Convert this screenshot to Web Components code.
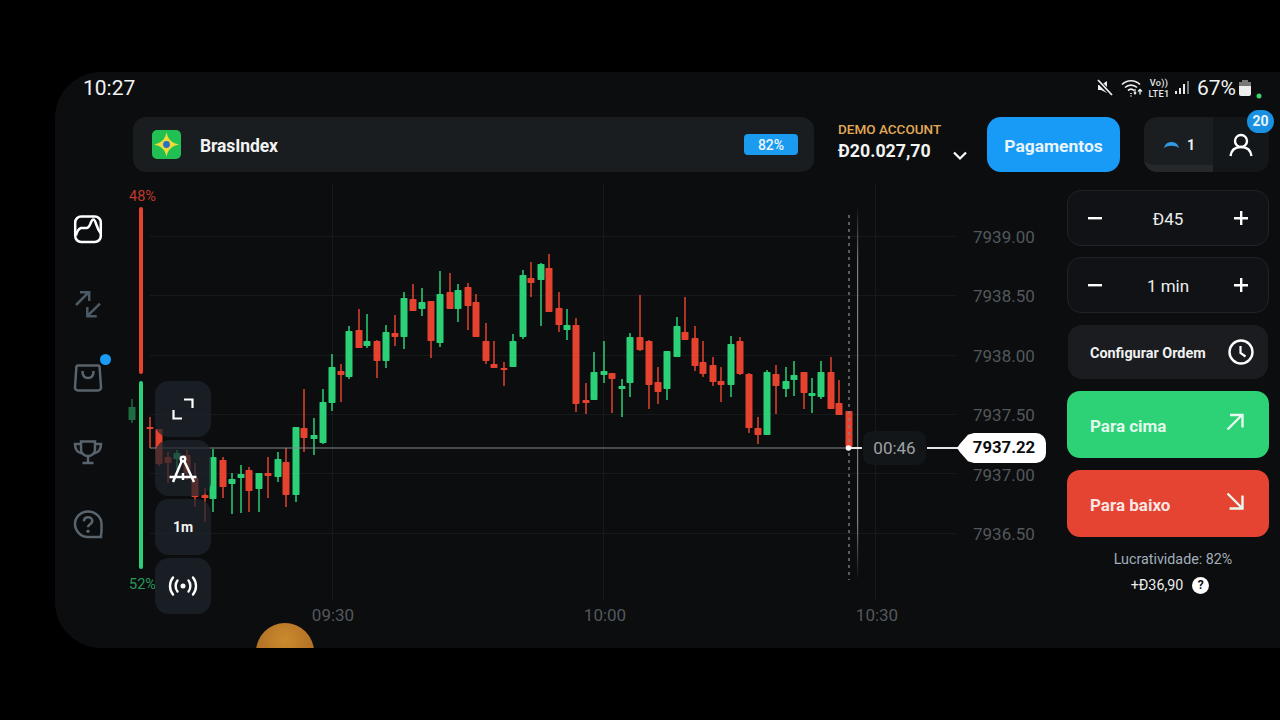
<!DOCTYPE html>
<html lang="pt">
<head>
<meta charset="utf-8">
<title>BrasIndex</title>
<style>
  html, body { margin: 0; height: 100%; background: #000; overflow: hidden; }
  body { font-family: Roboto, "Liberation Sans", sans-serif; color: #fff; padding: 72px 0 0 55px; box-sizing: border-box; }
</style>
</head>
<body>
<trade-app>
  <status-bar slot="status"></status-bar>
  <asset-bar slot="top" name="BrasIndex" payout="82%"></asset-bar>
  <account-info slot="top"></account-info>
  <pay-button slot="top">Pagamentos</pay-button>
  <profile-box slot="top"></profile-box>
  <side-nav slot="rail"></side-nav>
  <candle-chart slot="chart"></candle-chart>
  <stepper-control slot="panel">Đ45</stepper-control>
  <stepper-control slot="panel" style="margin-top:11px">1 min</stepper-control>
  <order-config slot="panel"></order-config>
  <trade-button slot="panel" dir="up">Para cima</trade-button>
  <trade-button slot="panel" dir="down">Para baixo</trade-button>
  <profit-info slot="panel"></profit-info>
</trade-app>

<script>
const makeEl = (html) => {
  const t = document.createElement('template');
  t.innerHTML = html;
  return t;
};

class BaseEl extends HTMLElement {
  constructor() {
    super();
    this.attachShadow({mode: 'open'});
    this.shadowRoot.appendChild(this.constructor.tpl.content.cloneNode(true));
  }
}

class TradeApp extends BaseEl {
  static tpl = makeEl(`
    <style>
      :host { display: block; width: 1225px; height: 576px; background: #0b0d0f; border-radius: 46px 0 0 46px; overflow: hidden; position: relative; }
      .top { display: flex; height: 55px; padding-left: 78px; margin-top: -1px; margin-bottom: 18px; }
      .main { display: grid; grid-template-columns: 70px 942px 202px; height: 458px; }
      .panel { display: flex; flex-direction: column; }
    </style>
    <slot name="status"></slot>
    <div class="top"><slot name="top"></slot></div>
    <div class="main">
      <slot name="rail"></slot>
      <slot name="chart"></slot>
      <div class="panel"><slot name="panel"></slot></div>
    </div>
  `);
}

class StatusBar extends BaseEl {
  static tpl = makeEl(`
    <style>
      :host { display: flex; align-items: center; height: 46px; padding: 0 18px 14px 28px; box-sizing: border-box; color: #f1f2f2; }
      .time { font-size: 21px; flex: 1; }
      .icons { display: flex; align-items: center; }
      .volte { font-size: 9.200px; font-weight: 500; line-height: 11px; width: 22px; margin-left: 3px; text-align: center; color: #e8e8e8; white-space: nowrap; letter-spacing: .3px; }
      .pct { font-size: 21px; margin-left: 6px; }
      svg { display: block; overflow: visible; }
    </style>
    <span class="time">10:27</span>
    <div class="icons">
      <svg width="16" height="18" viewBox="0 0 16 18"><path d="M1 6h3l6-4v12L4 11H1z" fill="#eee"/><path d="M0 1l16 16" stroke="#0b0d0f" stroke-width="4"/><path d="M1 1l14 15" stroke="#eee" stroke-width="1.8"/></svg>
      <svg width="24" height="20" viewBox="0 0 24 20" style="margin-left:8px" fill="none" stroke="#eee"><path d="M1 6.500c5-5 13-5 18 0M4 9.500c3.300-3.200 8.700-3.200 12 0M7 12.500c1.800-1.600 4.200-1.600 6 0" stroke-width="1.7"/><path d="M10 15v1M10 17.600v.8" stroke-width="1.6"/><path d="M19 16.500v-5M17 13.500l2-2 2 2" stroke-width="1.3"/><path d="M14 11v5M12.800 14.500l1.200 1.600 1.200-1.600" stroke-width="1.2"/></svg>
      <div class="volte">Vo))<br>LTE1</div>
      <svg width="17" height="16" viewBox="0 0 17 16" style="margin-left:4px" fill="#e8e8e8"><rect x="1" y="11" width="2" height="3"/><rect x="5" y="8" width="2" height="6"/><rect x="9" y="4" width="2" height="10"/><rect x="13" y="1" width="2" height="13" fill="#777"/></svg>
      <span class="pct">67%</span>
      <svg width="14" height="18" viewBox="0 0 14 18" style="margin-left:2px"><rect x="4" y="1" width="6" height="2" fill="#777"/><rect x="1" y="3" width="12" height="14" rx="2" fill="#eee"/><rect x="1" y="3" width="12" height="4" fill="#777"/></svg>
      <svg width="6" height="18" viewBox="0 0 6 18" style="margin-left:4px"><circle cx="3" cy="17" r="2.500" fill="#3ed36b"/></svg>
    </div>
  `);
}

class AssetBar extends BaseEl {
  static tpl = makeEl(`
    <style>
      :host { display: flex; align-items: center; box-sizing: border-box; width: 681px; background: #1a1d20; border-radius: 13px; padding: 0 16px 0 19px; }
      svg { display: block; }
      .name { font-size: 17.500px; font-weight: 700; margin-left: 19px; padding-top: 3px; flex: 1; color: #f2f3f3; letter-spacing: -.1px; }
      .badge { width: 54px; height: 21px; line-height: 22px; border-radius: 4px; background: #1a9bf0; font-size: 14px; font-weight: 500; text-align: center; color: #eaf5fd; }
    </style>
    <svg width="29" height="29" viewBox="0 0 29 29"><rect width="29" height="29" rx="5" fill="#21c053"/><path d="M14.500 2c1.200 7 5 11 12.500 12.500-7.500 1.500-11.300 5.500-12.500 12.500-1.200-7-5-11-12.500-12.500C9.500 13 13.300 9 14.500 2z" fill="#f0da3a"/><circle cx="14.500" cy="14.500" r="3.400" fill="#2a6fc4"/></svg>
    <span class="name"></span>
    <span class="badge"></span>
  `);
  connectedCallback() {
    this.shadowRoot.querySelector('.name').textContent = this.getAttribute('name');
    this.shadowRoot.querySelector('.badge').textContent = this.getAttribute('payout');
  }
}

class AccountInfo extends BaseEl {
  static tpl = makeEl(`
    <style>
      :host { display: grid; grid-template-columns: 1fr 20px; box-sizing: border-box; width: 149px; margin-left: 24px; padding: 1px 20px 0 0; align-content: start; }
      .label { grid-column: 1 / 3; font-size: 13.500px; font-weight: 500; color: #e2a956; white-space: nowrap; line-height: 22px; }
      .sum { font-size: 17.800px; font-weight: 700; color: #f2f3f3; white-space: nowrap; line-height: 22px; }
      svg { display: block; margin: 11px 0 0 6px; overflow: visible; }
    </style>
    <div class="label">DEMO ACCOUNT</div>
    <div class="sum">Đ20.027,70</div>
    <svg width="14" height="9" viewBox="0 0 14 9" fill="none" stroke="#fff" stroke-width="2.200"><path d="M1 1.500l6 6 6-6"/></svg>
  `);
}

class PayButton extends BaseEl {
  static tpl = makeEl(`
    <style>
      :host { display: flex; align-items: center; justify-content: center; box-sizing: border-box; padding-top: 2px; width: 133px; background: #189bf6; border-radius: 14px; font-size: 17.400px; font-weight: 700; color: #e8f5fe; }
    </style>
    <slot></slot>
  `);
}

class ProfileBox extends BaseEl {
  static tpl = makeEl(`
    <style>
      :host { display: flex; width: 125px; margin-left: 24px; position: relative; }
      .left { width: 69px; background: #1b1e21; border-radius: 13px 0 0 13px; border-bottom: 7px solid #26292c; box-sizing: border-box; display: flex; align-items: center; justify-content: center; gap: 8px; padding: 7px 0 0 2px; font-size: 14px; font-weight: 700; color: #eee; }
      .right { flex: 1; background: #141719; border-radius: 0 13px 13px 0; display: flex; align-items: center; justify-content: center; }
      .count { position: absolute; right: -5px; top: -7px; width: 27px; height: 23px; line-height: 23px; border-radius: 12px; background: #1a90e0; font-size: 14px; font-weight: 700; text-align: center; color: #e8f5fe; }
      svg { display: block; }
    </style>
    <div class="left">
      <svg width="15" height="8" viewBox="0 0 15 8"><path d="M0 7c1-4 4-6 7.500-6S14 3 15 7c-2-1.500-4.500-2.200-7.500-2.200S2 5.500 0 7z" fill="#2f9ae0"/></svg>
      <span>1</span>
    </div>
    <div class="right">
      <svg width="24" height="24" viewBox="0 0 24 24" fill="none" stroke="#fff" stroke-width="2.400"><circle cx="12" cy="8" r="6"/><path d="M1.500 23c.8-6 5-9 10.500-9s9.700 3 10.500 9"/></svg>
    </div>
    <span class="count">20</span>
  `);
}

class SideNav extends BaseEl {
  static tpl = makeEl(`
    <style>
      :host { display: flex; flex-direction: column; align-items: center; padding: 25px 4px 0 0; gap: 43.500px; }
      a { display: block; width: 30px; height: 30px; position: relative; color: #5a646d; }
      a.on { color: #fff; }
      a.dim { color: #4e5a63; }
      svg { display: block; overflow: visible; }
      i { position: absolute; right: -7.500px; top: -8px; width: 11px; height: 11px; border-radius: 50%; background: #1a9bf5; }
    </style>
    <a class="on"><svg width="30" height="30" viewBox="0 0 30 30" fill="none" stroke="currentColor" stroke-width="2.500"><rect x="2.200" y="1.500" width="25.600" height="25.500" rx="6"/><path d="M3 20.500c1-4 2-6.500 5-7.500h5.500c2 0 3-2 4-4.500.7-2 2-4 3-4 1.300 0 2 3 3 5.500 1 3 2.500 6 4 8"/></svg></a>
    <a class="dim"><svg width="30" height="30" viewBox="0 0 30 30" fill="none" stroke="currentColor" stroke-width="2.500"><path d="M3 16L16 3M7 3.200h9.200V12"/><path d="M27 14.700L14.300 27M14.300 18v9.200h9.400"/></svg></a>
    <a><svg width="30" height="30" viewBox="0 0 30 30" fill="none" stroke="currentColor" stroke-width="2.500"><path d="M5 3.500h20c1 0 1.500.5 1.600 1.500L28 25c.2 2-1 3.500-3 3.500H5c-2 0-3.200-1.500-3-3.500L3.400 5C3.500 4 4 3.500 5 3.500z"/><path d="M9.500 9c0 5 2.500 7 5.500 7s5.500-2 5.500-7"/></svg><i></i></a>
    <a><svg width="30" height="30" viewBox="0 0 30 30" fill="none" stroke="currentColor" stroke-width="2.500"><path d="M8 5.500h14v8c0 3.500-3 6.500-7 6.500s-7-3-7-6.500z"/><path d="M8 8H2c0 5 2 8.500 7 9.500M22 8h6c0 5-2 8.500-7 9.500M15 20v6.500M9.500 27h11"/></svg></a>
    <a><svg width="30" height="30" viewBox="0 0 30 30" fill="none" stroke="currentColor" stroke-width="2.500"><path d="M15 2.500C7.800 2.500 2 8.200 2 15s5.800 13 13 13h13v-2.500c.7-1 .5-3 .5-10.500C28.500 8.200 22.200 2.500 15 2.500z"/><path d="M10.800 12.300c.3-2.600 2-4 4.300-4 2.400 0 4.200 1.600 4.200 3.700 0 3.300-4.300 3.200-4.300 6.300" stroke-width="2.600"/><circle cx="15" cy="22.300" r="1.700" fill="currentColor" stroke="none"/></svg></a>
  `);
}

// x, wick top, body top, body bottom, wick bottom, colour
const CANDLES = [
  [150,417,427,428,448,'r'],[159,429,429,464,466,'r'],[168,452,457,463,483,'r'],[177,450,453,459,470,'g'],
  [187,450,455,473,480,'r'],[195,463,478,497,507,'r'],[205,488,495,498,522,'r'],[213,449,457,499,512,'g'],
  [223,457,460,487,498,'r'],[232,473,479,484,514,'g'],[241,465,474,478,513,'g'],[249,467,470,491,512,'r'],
  [259,473,473,489,512,'g'],[268,457,473,476,498,'r'],[278,452,459,477,482,'g'],[286,448,462,495,507,'r'],
  [296,427,427,495,502,'g'],[304,389,428,438,452,'r'],[314,418,435,439,455,'g'],[323,389,402,443,444,'g'],
  [332,354,367,403,411,'g'],[341,364,371,375,402,'r'],[349,326,331,377,379,'g'],[359,309,330,348,348,'r'],
  [367,314,341,346,348,'g'],[377,340,341,361,378,'r'],[386,325,332,361,368,'g'],[395,315,333,337,346,'r'],
  [404,292,298,337,349,'g'],[413,284,299,311,311,'r'],[422,288,302,309,316,'g'],[431,301,301,341,358,'r'],
  [440,271,294,343,347,'g'],[450,273,292,309,309,'r'],[458,284,290,309,322,'g'],[468,283,287,306,330,'r'],
  [476,294,302,337,337,'r'],[486,323,341,361,364,'r'],[494,341,364,368,368,'r'],[504,362,368,369,386,'r'],
  [513,334,341,367,367,'g'],[523,270,275,337,339,'g'],[531,262,278,283,297,'r'],[541,263,264,280,326,'g'],
  [549,254,268,312,312,'r'],[559,292,308,325,332,'r'],[567,309,325,330,340,'g'],[576,318,325,404,412,'r'],
  [586,383,400,403,414,'r'],[594,352,372,400,400,'g'],[604,341,371,375,383,'g'],[612,373,373,379,413,'r'],
  [622,379,386,389,417,'g'],[630,333,337,383,397,'g'],[640,295,337,350,351,'r'],[649,340,341,385,409,'r'],
  [658,367,382,392,404,'r'],[667,351,351,389,400,'g'],[677,317,326,357,357,'g'],[685,297,332,340,340,'r'],
  [695,326,338,366,371,'r'],[703,341,362,374,377,'r'],[713,357,365,382,386,'r'],[721,367,381,385,402,'r'],
  [731,336,344,385,397,'g'],[740,337,341,374,375,'r'],[749,373,374,428,433,'r'],[758,417,428,435,444,'r'],
  [767,370,372,435,435,'g'],[776,365,374,386,414,'r'],[786,367,381,389,397,'g'],[794,361,375,380,396,'g'],
  [804,372,372,393,409,'r'],[812,378,393,396,413,'g'],[821,361,372,397,399,'g'],[831,357,372,409,409,'r'],
  [839,380,403,415,415,'r'],[849,411,411,447,447,'r']
];
const COLORS = {r: '#e5432f', g: '#2bd077'};

class CandleChart extends BaseEl {
  static tpl = makeEl(`
    <style>
      :host { display: block; position: relative; font-family: Roboto, "Liberation Sans", sans-serif; }
      svg { display: block; overflow: visible; }
      text { font-size: 17px; fill: #53585c; }
      .pct { font-size: 14.500px; }
      .price { position: absolute; left: 832px; top: 243px; box-sizing: border-box; width: 89px; height: 30px; line-height: 30px; padding-left: 5px; background: #fff; color: #0b0d0f; font-size: 16.700px; font-weight: 700; text-align: center; border-radius: 0 10px 10px 0; clip-path: polygon(0 50%, 3px 36%, 11px 6%, 17px 0, 100% 0, 100% 100%, 17px 100%, 11px 94%, 3px 64%); }
      .timer { position: absolute; left: 738px; top: 241px; width: 63px; height: 34px; line-height: 34px; text-align: center; background: #131618; border-radius: 9px; color: #9ea2a4; font-size: 17px; }
      .coin { position: absolute; left: 131px; top: 433px; width: 58px; height: 58px; border-radius: 50%; background: radial-gradient(circle at 50% 30%, #cc8a2e, #9f5f1f); }
    </style>
    <svg width="942" height="458" viewBox="125 190 942 458"></svg>
    <div class="coin"></div>
    <span class="timer">00:46</span>
    <span class="price">7937.22</span>
    <chart-tools></chart-tools>
  `);

  connectedCallback() {
    const ns = 'http://www.w3.org/2000/svg';
    const svg = this.shadowRoot.querySelector('svg');
    const add = (name, attrs, text) => {
      const el = document.createElementNS(ns, name);
      for (const k in attrs) el.setAttribute(k, attrs[k]);
      if (text) el.textContent = text;
      svg.appendChild(el);
      return el;
    };
    const defs = add('defs', {});
    defs.innerHTML = `<linearGradient id="fade" x1="0" x2="0" y1="0" y2="1"><stop offset="0" stop-color="#7c7f81" stop-opacity="0"/><stop offset=".15" stop-color="#7c7f81"/><stop offset=".85" stop-color="#7c7f81"/><stop offset="1" stop-color="#7c7f81" stop-opacity="0"/></linearGradient>`;

    [236, 295, 355, 414, 473, 533].forEach((y) => {
      add('line', {x1: 150, x2: 955, y1: y + .5, y2: y + .5, stroke: '#17191b', 'stroke-width': 1});
    });
    [332, 603, 875].forEach((x) => {
      add('line', {x1: x + .5, x2: x + .5, y1: 184, y2: 600, stroke: '#17191b', 'stroke-width': 1});
    });

    [['7939.00', 237], ['7938.50', 296], ['7938.00', 356], ['7937.50', 415], ['7937.00', 475], ['7936.50', 534]].forEach(([t, y]) => {
      add('text', {x: 973, y: y + 6}, t);
    });
    [['09:30', 333], ['10:00', 605], ['10:30', 877]].forEach(([t, x]) => {
      add('text', {x, y: 621, 'text-anchor': 'middle'}, t);
    });

    // faded candle behind the sentiment bar
    add('line', {x1: 132, x2: 132, y1: 399, y2: 423, stroke: '#1f6b42', 'stroke-width': 1.5});
    add('rect', {x: 128.500, y: 407, width: 7, height: 13, fill: '#1f6b42'});

    CANDLES.forEach(([x, wt, bt, bb, wb, c]) => {
      add('line', {x1: x, x2: x, y1: wt, y2: wb, stroke: COLORS[c], 'stroke-width': 1.500});
      add('rect', {x: x - 3.500, y: bt, width: 7, height: Math.max(bb - bt, 2), rx: .8, fill: COLORS[c]});
    });

    // price line and timer guides
    add('line', {x1: 150, x2: 848, y1: 448, y2: 448, stroke: '#85888a', 'stroke-width': 1});
    add('line', {x1: 849, x2: 849, y1: 215, y2: 580, stroke: '#85888a', 'stroke-width': 1.300, 'stroke-dasharray': '3 4'});
    add('rect', {x: 857, y: 205, width: 1.200, height: 375, fill: 'url(#fade)'});
    add('line', {x1: 848, x2: 862, y1: 448, y2: 448, stroke: '#fff', 'stroke-width': 1.800});
    add('line', {x1: 927, x2: 958, y1: 448, y2: 448, stroke: '#fff', 'stroke-width': 1.800});
    add('circle', {cx: 848.500, cy: 448, r: 2.800, fill: '#fff'});

    // long/short sentiment bars
    add('rect', {x: 139, y: 207, width: 4, height: 167, rx: 2, fill: '#e5432f'});
    add('rect', {x: 139, y: 381, width: 4, height: 188, rx: 2, fill: '#2bd077'});
    add('text', {x: 142.500, y: 201, 'text-anchor': 'middle', class: 'pct', style: 'fill:#c0392b'}, '48%');
    add('text', {x: 142.500, y: 589, 'text-anchor': 'middle', class: 'pct', style: 'fill:#269a5a'}, '52%');
  }
}

class ChartTools extends BaseEl {
  static tpl = makeEl(`
    <style>
      :host { position: absolute; left: 30px; top: 191px; display: flex; flex-direction: column; gap: 3px; }
      .b { width: 56px; height: 56px; border-radius: 14px; background: rgba(31,38,45,.72); display: flex; align-items: center; justify-content: center; font-size: 14px; font-weight: 700; color: #f4f4f4; }
      svg { display: block; overflow: visible; }
    </style>
    <div class="b"><svg width="22" height="22" viewBox="0 0 22 22" fill="none" stroke="#fff" stroke-width="2.200"><path d="M12 1.500h8.500V10M1.500 12v8.500H10"/></svg></div>
    <div class="b"><svg width="28" height="30" viewBox="0 0 28 30" fill="none" stroke="#fff" stroke-width="2.500"><circle cx="14" cy="6" r="2.200"/><path d="M12.800 8L4 29M15.200 8l9.800 21M.5 24h27M14 20v7"/></svg></div>
    <div class="b">1m</div>
    <div class="b"><svg width="28" height="20" viewBox="0 0 28 20" fill="none" stroke="#fff" stroke-width="2.400" stroke-linecap="round"><circle cx="14" cy="10" r="2.500" fill="#fff" stroke="none"/><path d="M8.500 4.500c-2.500 3-2.500 8 0 11M19.500 4.500c2.500 3 2.500 8 0 11M4 1.500c-4 5-4 12 0 17M24 1.500c4 5 4 12 0 17"/></svg></div>
  `);
}

class StepperControl extends BaseEl {
  static tpl = makeEl(`
    <style>
      :host { display: flex; align-items: center; justify-content: space-between; box-sizing: border-box; height: 56px; border: 1.500px solid #212427; background: #101215; border-radius: 14px; padding: 0 20px; font-size: 17px; color: #eceded; }
      span { padding-top: 2px; }
      svg { display: block; }
    </style>
    <svg width="14" height="14" viewBox="0 0 14 14"><rect y="6" width="14" height="2.400" fill="#fff"/></svg>
    <span><slot></slot></span>
    <svg width="14" height="14" viewBox="0 0 14 14"><path d="M0 6h6V0h2.400v6H14v2.400H8.400V14H6V8.400H0z" fill="#fff"/></svg>
  `);
}

class OrderConfig extends BaseEl {
  static tpl = makeEl(`
    <style>
      :host { display: flex; align-items: center; justify-content: space-between; box-sizing: border-box; height: 54px; margin: 12px 1px 12px; background: #1a1c1f; border-radius: 14px; padding: 2px 14px 0 22px; font-size: 14.400px; font-weight: 700; color: #f0f1f1; }
      svg { display: block; margin-top: -2px; }
    </style>
    <span>Configurar Ordem</span>
    <svg width="26" height="26" viewBox="0 0 26 26" fill="none" stroke="#fff" stroke-width="2.400"><circle cx="13" cy="13" r="11.500"/><path d="M12.500 7v7l5 3.500" stroke-width="2.200"/></svg>
  `);
}

class TradeButton extends BaseEl {
  static tpl = makeEl(`
    <style>
      :host { display: flex; align-items: center; justify-content: space-between; box-sizing: border-box; height: 67px; border-radius: 13px; padding: 2px 25px 0 23px; font-size: 17px; font-weight: 700; color: rgba(255,255,255,.88); }
      :host([dir=up]) { background: #2dd277; margin-bottom: 12px; }
      :host([dir=down]) { background: #e54432; }
      svg { display: block; margin-top: -7px; }
    </style>
    <slot></slot>
    <svg width="18" height="18" viewBox="0 0 18 18" fill="none" stroke="#e8f8ee" stroke-width="2.400"></svg>
  `);
  connectedCallback() {
    const up = this.getAttribute('dir') === 'up';
    this.shadowRoot.querySelector('svg').innerHTML = up
      ? '<path d="M1.500 16.500L16 2M4 2h12.500v12.500"/>'
      : '<path d="M1.500 1.500L16 16M16.500 3.500V16.500H3.500"/>';
  }
}

class ProfitInfo extends BaseEl {
  static tpl = makeEl(`
    <style>
      :host { display: flex; flex-direction: column; align-items: center; padding-top: 13px; font-size: 14.300px; color: #a3aebb; }
      div { line-height: 18px; }
      .lucro { margin-left: 10px; }
      .sum { display: flex; align-items: center; gap: 9px; margin: 8px 0 0 4px; color: #eceded; }
      i { display: block; width: 17px; height: 17px; border-radius: 50%; background: #fff; color: #0b0d0f; font-style: normal; font-weight: 700; font-size: 12px; line-height: 17px; text-align: center; }
    </style>
    <div class="lucro">Lucratividade: 82%</div>
    <div class="sum"><span>+Đ36,90</span><i>?</i></div>
  `);
}

customElements.define('trade-app', TradeApp);
customElements.define('status-bar', StatusBar);
customElements.define('asset-bar', AssetBar);
customElements.define('account-info', AccountInfo);
customElements.define('pay-button', PayButton);
customElements.define('profile-box', ProfileBox);
customElements.define('side-nav', SideNav);
customElements.define('chart-tools', ChartTools);
customElements.define('candle-chart', CandleChart);
customElements.define('stepper-control', StepperControl);
customElements.define('order-config', OrderConfig);
customElements.define('trade-button', TradeButton);
customElements.define('profit-info', ProfitInfo);
</script>
</body>
</html>
